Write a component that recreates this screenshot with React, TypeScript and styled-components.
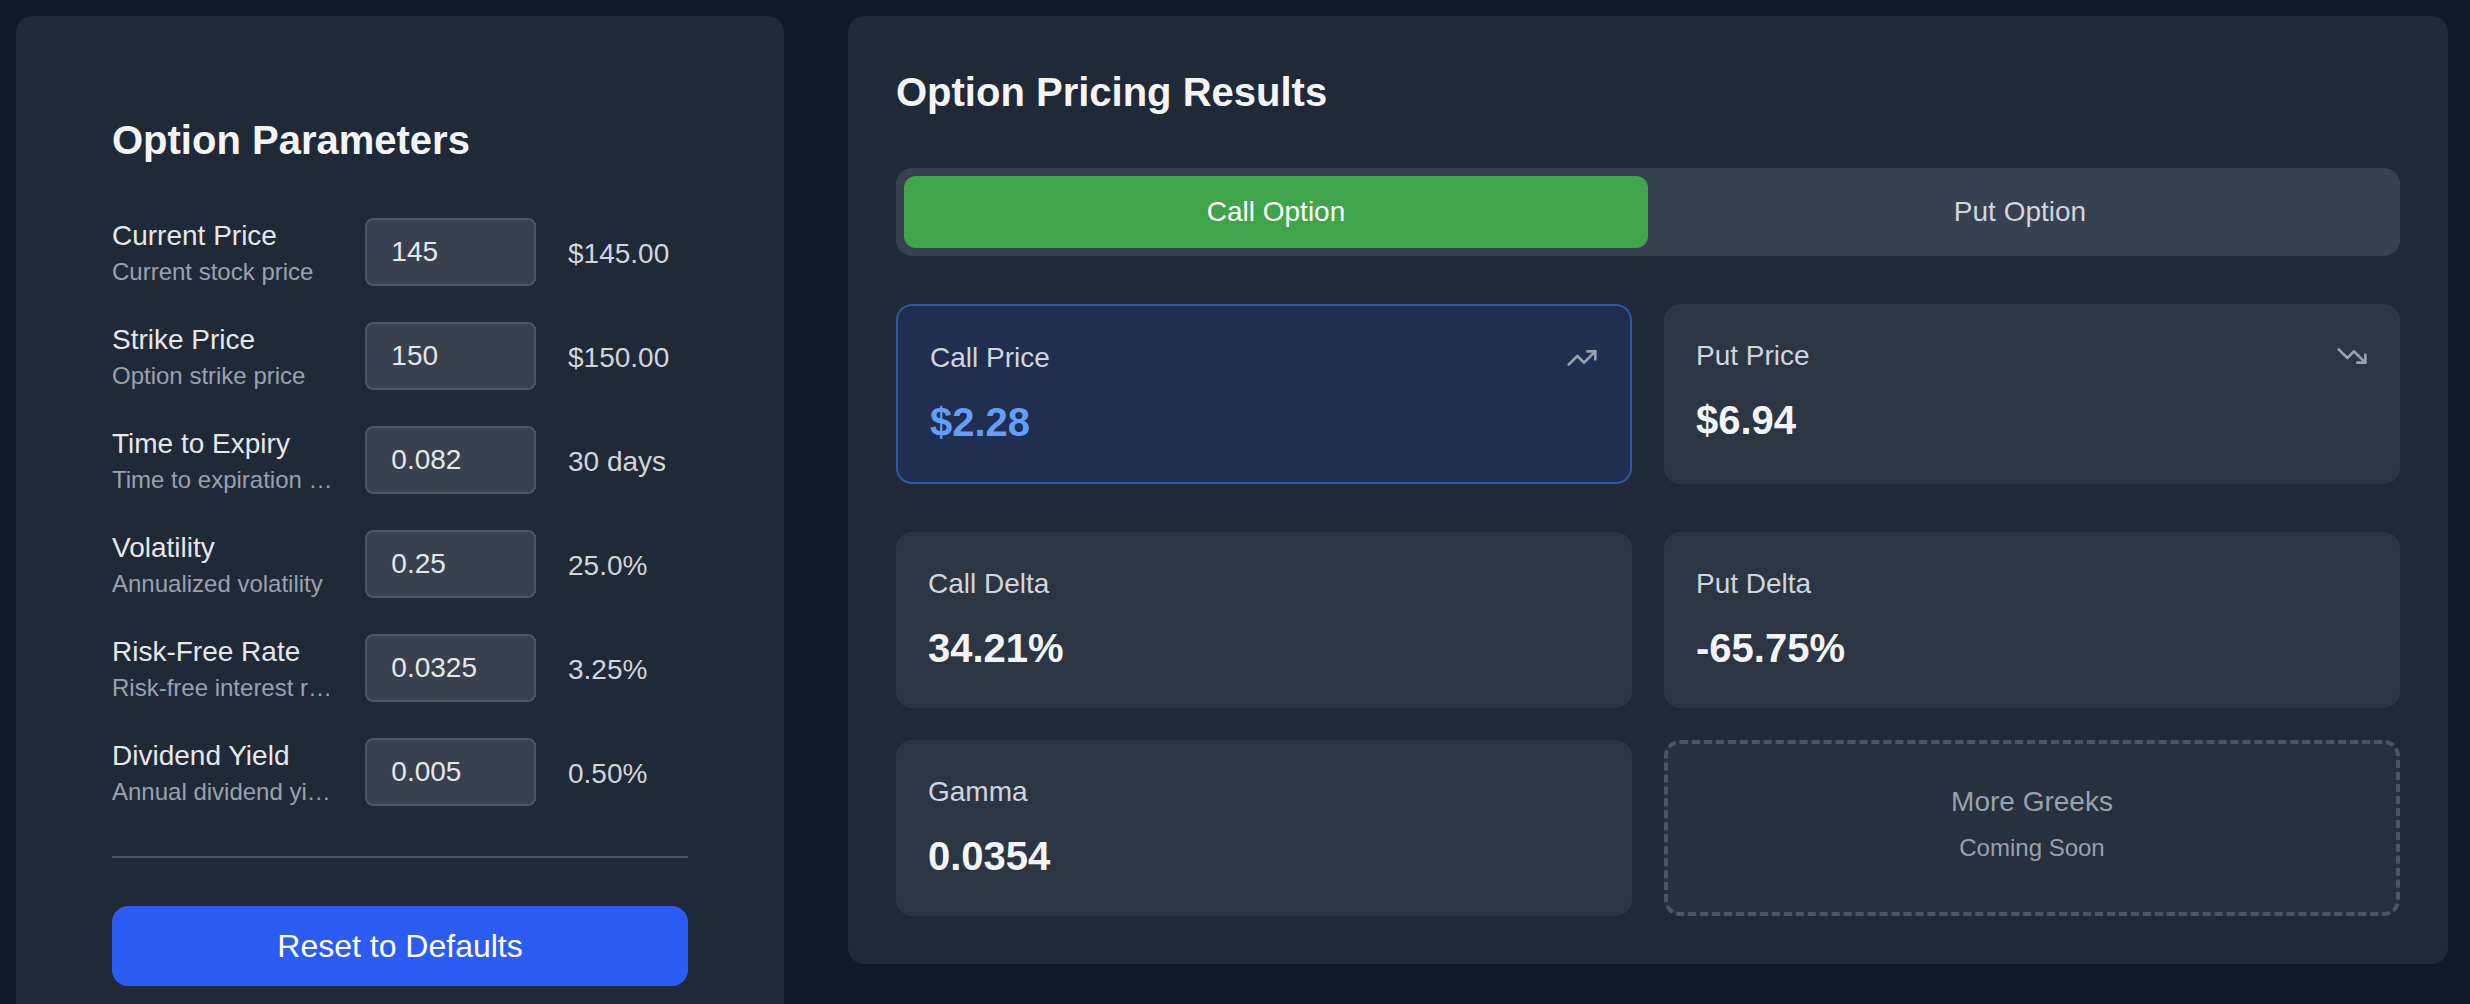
import { useState } from "react";
import styled, { createGlobalStyle, css } from "styled-components";
import { TrendingDown, TrendingUp } from "lucide-react";

const GlobalStyle = createGlobalStyle`
  *, *::before, *::after { box-sizing: border-box; }
  body {
    margin: 0;
    background: #111827;
    color: #f3f4f6;
    font-family: "Liberation Sans", Arial, Helvetica, sans-serif;
    font-size: 32px;
    line-height: 48px;
    -webkit-font-smoothing: antialiased;
  }
  h2, p { margin: 0; }
  button, input { font: inherit; }
`;

const Page = styled.main`
  display: flex;
  align-items: flex-start;
  gap: 64px;
  padding: 16px 22px 16px 16px;
`;

const Panel = styled.section`
  background: #202937;
  border-radius: 16px;
`;

const ParametersPanel = styled(Panel)`
  flex: 0 0 768px;
  padding: 96px;
`;

const ResultsPanel = styled(Panel)`
  flex: 1;
  min-width: 0;
  padding: 48px;
`;

const Heading = styled.h2`
  margin-bottom: 48px;
  font-size: 40px;
  line-height: 56px;
  font-weight: 700;
`;

const ParameterList = styled.div`
  display: flex;
  flex-direction: column;
  gap: 32px;
`;

const ParameterRow = styled.div`
  display: grid;
  grid-template-columns: repeat(12, minmax(0, 1fr));
  column-gap: 32px;
  align-items: center;
`;

const LabelCell = styled.div`
  grid-column: span 5;
`;

const ParameterLabel = styled.label`
  display: block;
  color: #e5e7eb;
  font-size: 28px;
  line-height: 40px;
`;

const Hint = styled.p`
  overflow: hidden;
  color: #99a1af;
  font-size: 24px;
  line-height: 32px;
  text-overflow: ellipsis;
  white-space: nowrap;
`;

const ParameterInput = styled.input`
  grid-column: span 4;
  width: 100%;
  padding: 12px 24px;
  border: 2px solid #4b5563;
  border-radius: 8px;
  background: #394150;
  color: #e5e7eb;
  font-size: 28px;
  line-height: 40px;
  outline: none;
`;

const ValueCell = styled.div`
  grid-column: span 3;
`;

const FormattedValue = styled.span`
  color: #d1d5dc;
  font-size: 28px;
  line-height: 40px;
`;

const Footer = styled.div`
  margin-top: 48px;
  padding-top: 48px;
  border-top: 2px solid #4b5563;
`;

const ResetButton = styled.button`
  display: block;
  width: 100%;
  padding: 16px 32px;
  border: 0;
  border-radius: 16px;
  background: #2c5cf3;
  color: #ffffff;
  cursor: pointer;
`;

const Tabs = styled.div`
  display: flex;
  margin-bottom: 48px;
  padding: 8px;
  border-radius: 16px;
  background: #384151;
`;

const Tab = styled.button<{ $active: boolean }>`
  flex: 1;
  padding: 16px 32px;
  border: 0;
  border-radius: 12px;
  background: ${(p) => (p.$active ? "#40a44b" : "transparent")};
  color: ${(p) => (p.$active ? "#ffffff" : "#d1d5dc")};
  font-size: 28px;
  line-height: 40px;
  cursor: pointer;
`;

const CardGrid = styled.div`
  display: grid;
  grid-template-columns: repeat(2, minmax(0, 1fr));
  gap: 32px;

  & + & {
    margin-top: 48px;
  }
`;

const Card = styled.article<{ $highlighted?: boolean }>`
  padding: 32px;
  border-radius: 16px;
  background: #2c3544;
  ${(p) =>
    p.$highlighted &&
    css`
      border: 2px solid #3156ac;
      background: #202e50;
    `}
`;

const CardHeader = styled.div`
  display: flex;
  align-items: center;
  justify-content: space-between;
  margin-bottom: 16px;
  color: #99a1af;
`;

const CardLabel = styled.p`
  color: #d1d5dc;
  font-size: 28px;
  line-height: 40px;
`;

const CardValue = styled.p<{ $highlighted?: boolean }>`
  color: ${(p) => (p.$highlighted ? "#639ff8" : "#f3f4f6")};
  font-size: 40px;
  line-height: 56px;
  font-weight: 700;
`;

const PlaceholderCard = styled.article`
  padding: 32px;
  border: 4px dashed #4b5563;
  border-radius: 16px;
  background: #27303f;
  color: #99a1af;
  text-align: center;
`;

const PlaceholderTitle = styled.span`
  font-size: 28px;
  line-height: 40px;
`;

const PlaceholderNote = styled.p`
  margin-top: 8px;
  font-size: 24px;
  line-height: 32px;
`;

type Parameter = {
  id: string;
  label: string;
  hint: string;
  initial: string;
  format: (value: number) => string;
};

const parameters: Parameter[] = [
  { id: "spot", label: "Current Price", hint: "Current stock price", initial: "145", format: (v) => `$${v.toFixed(2)}` },
  { id: "strike", label: "Strike Price", hint: "Option strike price", initial: "150", format: (v) => `$${v.toFixed(2)}` },
  { id: "expiry", label: "Time to Expiry", hint: "Time to expiration in years", initial: "0.082", format: (v) => `${Math.round(v * 365)} days` },
  { id: "volatility", label: "Volatility", hint: "Annualized volatility", initial: "0.25", format: (v) => `${(v * 100).toFixed(1)}%` },
  { id: "rate", label: "Risk-Free Rate", hint: "Risk-free interest rate", initial: "0.0325", format: (v) => `${(v * 100).toFixed(2)}%` },
  { id: "dividend", label: "Dividend Yield", hint: "Annual dividend yield", initial: "0.005", format: (v) => `${(v * 100).toFixed(2)}%` },
];

const defaults: Record<string, string> = Object.fromEntries(parameters.map((p) => [p.id, p.initial]));

type ResultCardProps = {
  label: string;
  value: string;
  highlighted?: boolean;
  icon?: React.ReactNode;
};

function ResultCard({ label, value, highlighted, icon }: ResultCardProps) {
  return (
    <Card $highlighted={highlighted}>
      <CardHeader>
        <CardLabel>{label}</CardLabel>
        {icon}
      </CardHeader>
      <CardValue $highlighted={highlighted}>{value}</CardValue>
    </Card>
  );
}

export default function App() {
  const [values, setValues] = useState(defaults);
  const [side, setSide] = useState<"call" | "put">("call");

  return (
    <>
      <GlobalStyle />
      <Page>
        <ParametersPanel>
          <Heading>Option Parameters</Heading>
          <ParameterList>
            {parameters.map((p) => (
              <ParameterRow key={p.id}>
                <LabelCell>
                  <ParameterLabel htmlFor={p.id}>{p.label}</ParameterLabel>
                  <Hint>{p.hint}</Hint>
                </LabelCell>
                <ParameterInput
                  id={p.id}
                  type="text"
                  inputMode="decimal"
                  value={values[p.id]}
                  onChange={(e) => setValues({ ...values, [p.id]: e.target.value })}
                />
                <ValueCell>
                  <FormattedValue>{p.format(Number(values[p.id]) || 0)}</FormattedValue>
                </ValueCell>
              </ParameterRow>
            ))}
          </ParameterList>
          <Footer>
            <ResetButton type="button" onClick={() => setValues(defaults)}>
              Reset to Defaults
            </ResetButton>
          </Footer>
        </ParametersPanel>

        <ResultsPanel>
          <Heading>Option Pricing Results</Heading>
          <Tabs role="tablist">
            <Tab type="button" role="tab" aria-selected={side === "call"} $active={side === "call"} onClick={() => setSide("call")}>
              Call Option
            </Tab>
            <Tab type="button" role="tab" aria-selected={side === "put"} $active={side === "put"} onClick={() => setSide("put")}>
              Put Option
            </Tab>
          </Tabs>
          <CardGrid>
            <ResultCard label="Call Price" value="$2.28" highlighted={side === "call"} icon={<TrendingUp size={32} />} />
            <ResultCard label="Put Price" value="$6.94" highlighted={side === "put"} icon={<TrendingDown size={32} />} />
          </CardGrid>
          <CardGrid>
            <ResultCard label="Call Delta" value="34.21%" />
            <ResultCard label="Put Delta" value="-65.75%" />
            <ResultCard label="Gamma" value="0.0354" />
            <PlaceholderCard>
              <PlaceholderTitle>More Greeks</PlaceholderTitle>
              <PlaceholderNote>Coming Soon</PlaceholderNote>
            </PlaceholderCard>
          </CardGrid>
        </ResultsPanel>
      </Page>
    </>
  );
}
